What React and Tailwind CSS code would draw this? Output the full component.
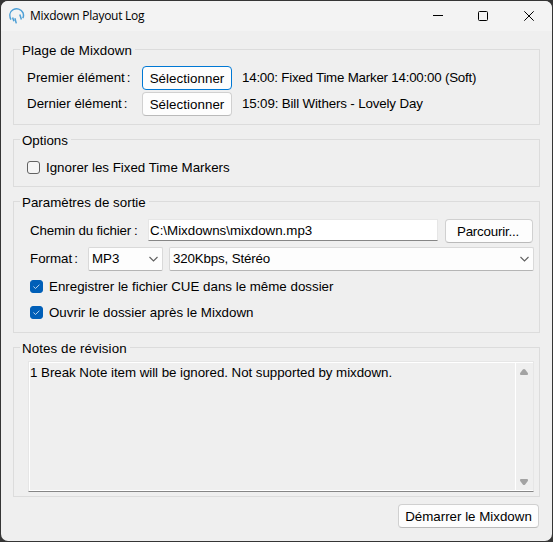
import React, { useState } from 'react';

function Group({ title, titleClass = '', className, children }) {
  return (
    <fieldset className={`mx-[12px] border border-[#dcdcdc] ${className}`}>
      <legend className={`ml-[6px] h-[19px] pl-[2px] pr-[3px] leading-[21px] ${titleClass}`}>{title}</legend>
      {children}
    </fieldset>
  );
}

function Button({ focused, className, children }) {
  return (
    <button
      className={`h-[24px] shrink-0 rounded-[4px] border bg-[#fdfdfd] text-center leading-[23px] ${
        focused ? 'border-[#0078d4]' : 'border-[#d0d0d0] border-b-[#bababa]'
      } ${className}`}
    >
      {children}
    </button>
  );
}

function Checkbox({ label, defaultChecked = false }) {
  const [checked, setChecked] = useState(defaultChecked);
  return (
    <button className="flex h-[13px] items-center gap-[6px]" onClick={() => setChecked(!checked)}>
      <span
        className={`flex size-[13px] items-center justify-center rounded-[3px] border ${
          checked ? 'border-[#005fb8] bg-[#005fb8]' : 'border-[#626262] bg-[#f5f5f5]'
        }`}
      >
        {checked && (
          <svg width="9" height="9" viewBox="0 0 9 9" fill="none" stroke="#b8d4ee" strokeWidth="1">
            <path d="M1.4 4.5 3.5 6.5 7.4 2.7" />
          </svg>
        )}
      </span>
      <span>{label}</span>
    </button>
  );
}

function Select({ value, className }) {
  return (
    <div className={`flex h-[24px] items-center justify-between rounded-[2px] border border-[#d9d9d9] border-b-[#b5b5b5] bg-[#fdfdfd] pl-[3px] pr-[4px] ${className}`}>
      <span>{value}</span>
      <svg width="9" height="6" viewBox="0 0 9 6" fill="none" stroke="#5f5f5f" strokeWidth="1.1">
        <path d="M.5 1 4.5 4.9 8.5 1" />
      </svg>
    </div>
  );
}

function AppIcon() {
  return (
    <svg width="16" height="17" viewBox="0 0 16 17" fill="none" stroke="#4d9fd6">
      <path d="M1.9 11.6C.1 7.8.7 3.6 4.2 1.7 7.8-.1 12.2 1 13.9 4.6c.9 2.4.6 4.4-.2 5.6" strokeWidth="1.5" />
      <path d="M3.6 9.4 4.9 13.2M5.9 10.2 7.3 15.4M10.8 6.6 12.4 11.4" strokeWidth="1.5" />
    </svg>
  );
}

export default function App() {
  return (
    <div className="h-[542px] w-[553px] overflow-hidden bg-[#353535] p-px font-['Liberation_Sans',Arial,sans-serif] text-[13.33px] text-black">
      <div className="flex h-[540px] w-[551px] flex-col overflow-hidden rounded-[7px] bg-[#efefef] whitespace-nowrap">
        <header className="flex h-[30px] shrink-0 items-center bg-[#f3f3f3] pl-[8px]">
          <AppIcon />
          <h1 className="ml-[5px] font-['Open_Sans',sans-serif] text-[12px] leading-[16px] tracking-[-0.27px]">Mixdown Playout Log</h1>
          <div className="ml-auto flex items-center pr-[18px] text-black">
            <svg width="10" height="10" viewBox="0 0 10 10" stroke="currentColor">
              <path d="M0 4.5h10" />
            </svg>
            <svg className="ml-[35px]" width="10" height="10" viewBox="0 0 10 10" fill="none" stroke="currentColor">
              <rect x=".5" y=".5" width="9" height="9" rx="1" />
            </svg>
            <svg className="ml-[36px]" width="10" height="10" viewBox="0 0 10 10" stroke="currentColor">
              <path d="M.3.3 9.7 9.7M9.7.3.3 9.7" />
            </svg>
          </div>
        </header>

        <Group title="Plage de Mixdown" titleClass="tracking-[0.06px]" className="mt-[9px] h-[85px]">
          <div className="mt-[7px] flex flex-col gap-[2px] pl-[13px]">
            <div className="flex h-[24px] items-center">
              <span className="w-[115px]">Premier élément<span className="ml-[2px]">:</span></span>
              <Button focused className="w-[90px] tracking-[0.05px]">Sélectionner</Button>
              <span className="ml-[10px] tracking-[-0.22px]">14:00: Fixed Time Marker 14:00:00 (Soft)</span>
            </div>
            <div className="flex h-[24px] items-center">
              <span className="w-[115px]">Dernier élément<span className="ml-[2px]">:</span></span>
              <Button className="w-[90px] tracking-[0.05px]">Sélectionner</Button>
              <span className="ml-[10px] tracking-[-0.14px]">15:09: Bill Withers - Lovely Day</span>
            </div>
          </div>
        </Group>

        <Group title="Options" className="mt-[5px] h-[57px]">
          <div className="mt-[12px] pl-[13px]">
            <Checkbox label="Ignorer les Fixed Time Markers" />
          </div>
        </Group>

        <Group title="Paramètres de sortie" className="mt-[5px] h-[141px]">
          <div className="mt-[8px] flex h-[24px] items-start pl-[16px]">
            <span className="w-[118px] leading-[23px] tracking-[-0.16px]">Chemin du fichier<span className="ml-[3px]">:</span></span>
            <input
              className="h-[22px] w-[290px] border border-[#e6e6e6] border-b-[#868686] bg-white pl-[1px] outline-none"
              defaultValue="C:\Mixdowns\mixdown.mp3"
            />
            <Button className="ml-[7px] w-[88px] pr-[2px] tracking-[-0.2px]">Parcourir...</Button>
          </div>
          <div className="mt-[4px] flex h-[24px] items-center pl-[16px]">
            <span className="w-[58px]">Format<span className="ml-[2px]">:</span></span>
            <Select value="MP3" className="w-[75px]" />
            <Select value="320Kbps, Stéréo" className="ml-[6px] w-[365px] tracking-[-0.15px]" />
          </div>
          <div className="mt-[9px] flex flex-col gap-[13px] pl-[16px]">
            <Checkbox defaultChecked label="Enregistrer le fichier CUE dans le même dossier" />
            <Checkbox defaultChecked label="Ouvrir le dossier après le Mixdown" />
          </div>
        </Group>

        <Group title="Notes de révision" titleClass="tracking-[0.1px]" className="mt-[5px] h-[159px]">
          <div className="ml-[14px] mt-[4px] flex h-[131px] w-[506px] border border-[#e6e6e6] border-b-[#868686]">
            <div className="flex grow border border-r-0 border-white">
              <p className="grow pt-[1px] leading-[17px] tracking-[-0.04px]">1 Break Note item will be ignored. Not supported by mixdown.</p>
              <div className="flex w-[18px] flex-col items-center justify-between border-l border-white pb-[5px] pr-[1px] pt-[6px]">
                <svg width="8" height="6" viewBox="0 0 8 6" fill="#a3a3a3">
                  <path d="M2.8.6Q4-.5 5.2.6L7.8 4Q8.5 6 7 6H1Q-.5 6 .2 4Z" />
                </svg>
                <svg width="8" height="6" viewBox="0 0 8 6" fill="#a3a3a3">
                  <path d="M2.8 5.4Q4 6.5 5.2 5.4L7.8 2Q8.5 0 7 0H1Q-.5 0 .2 2Z" />
                </svg>
              </div>
            </div>
          </div>
        </Group>

        <footer className="mt-[7px] flex justify-end pr-[13px]">
          <Button className="w-[141px]">Démarrer le Mixdown</Button>
        </footer>
      </div>
    </div>
  );
}
